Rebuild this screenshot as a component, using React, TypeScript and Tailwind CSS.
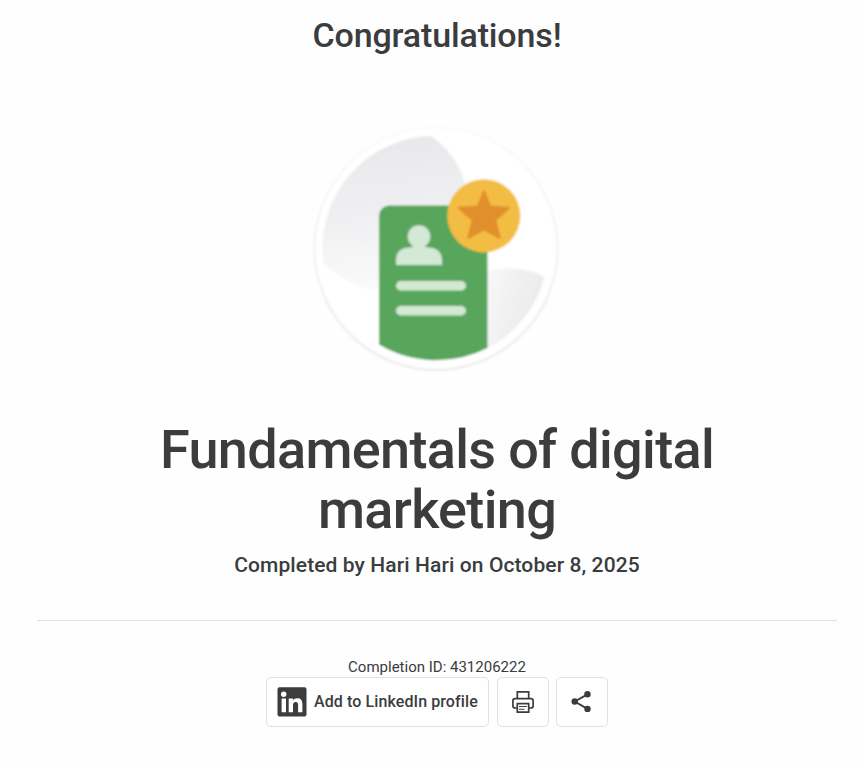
import type { ReactNode } from "react";

function CourseBadge() {
  return (
    <svg width="256" height="260" viewBox="308 118 256 260" aria-hidden="true">
      <defs>
        <linearGradient id="leaf" x1="375" y1="140" x2="395" y2="290" gradientUnits="userSpaceOnUse">
          <stop offset="0" stopColor="#e8e8eb" />
          <stop offset="0.5" stopColor="#f0f0f2" />
          <stop offset="1" stopColor="#fbfbfb" />
        </linearGradient>
        <linearGradient id="leafSmall" x1="535" y1="310" x2="480" y2="295" gradientUnits="userSpaceOnUse">
          <stop offset="0" stopColor="#ebebed" />
          <stop offset="1" stopColor="#f8f8f9" />
        </linearGradient>
        <linearGradient id="ring" x1="436" y1="126" x2="436" y2="371" gradientUnits="userSpaceOnUse">
          <stop offset="0" stopColor="#fbfbfb" />
          <stop offset="1" stopColor="#ececec" />
        </linearGradient>
        <filter id="soft" x="-5%" y="-5%" width="110%" height="110%">
          <feGaussianBlur stdDeviation="0.8" />
        </filter>
      </defs>
      <g filter="url(#soft)">
        <circle cx="436" cy="248.5" r="121.5" fill="#fff" stroke="url(#ring)" strokeWidth="2.4" />
        <path d="M428.5 136A112.5 112.5 0 0 0 323.5 264C339 277 355 287 375 290L440 270L464.5 183C460 163 447 148 433 137.500Q430.500 136 428.500 136Z" fill="url(#leaf)" />
        <path d="M486 272C502 266 526 267 544.500 277A112.500 112.500 0 0 1 486 349Z" fill="url(#leafSmall)" />
        <path d="M379 216A10.500 10.500 0 0 1 389.500 205.500H487.500V348A112.500 112.500 0 0 1 379 344.500Z" fill="#58a55c" />
        <circle cx="419" cy="236.500" r="11.300" fill="#d3e9d6" />
        <path d="M396 265V260C396 252 401.500 247.500 409 247.500Q414 247.500 414 244H424Q424 247.500 429 247.500C437 247.500 442 253 442 260V265Z" fill="#d3e9d6" />
        <rect x="396" y="281" width="70" height="9.500" rx="4.700" fill="#d3e9d6" />
        <rect x="396" y="306" width="70" height="9.500" rx="4.700" fill="#d3e9d6" />
        <circle cx="483.800" cy="215.800" r="36.600" fill="#f2bd42" />
        <path d="M484 191.500L490 206.800L508.500 208L495 220L499.500 237.600L484 229.200L468.500 237.600L473 220L459 208L478 206.800Z" fill="#e18f2b" stroke="#e18f2b" strokeWidth="2.400" strokeLinejoin="round" />
      </g>
    </svg>
  );
}

function LinkedInIcon() {
  return (
    <svg width="30" height="30" viewBox="0 0 30 30" aria-hidden="true">
      <rect x="0.500" y="0.300" width="29" height="29.200" rx="2" fill="#3a3c3e" />
      <circle cx="6.700" cy="7.200" r="2.700" fill="#fff" />
      <path d="M4.600 11.600H9V25.300H4.600zM11.700 11.600H15.900V13.500C16.700 12.100 18.300 11.200 20.300 11.200C24.400 11.200 25.400 13.900 25.400 17.700V25.300H21.100V18.500C21.100 16.700 21 14.900 18.700 14.900C16.500 14.900 16 16.500 16 18.400V25.300H11.700z" fill="#fff" />
    </svg>
  );
}

function PrintIcon() {
  return (
    <svg width="22" height="22" viewBox="0 0 22 22" fill="none" stroke="#3a3c3e" strokeWidth="1.700" aria-hidden="true">
      <path d="M5.300 7.500V0.900H16.700V7.500" />
      <path d="M5.200 17H3.200Q0.900 17 0.900 15V9.700Q0.900 7.700 3.200 7.700H18.800Q21.100 7.700 21.100 9.700V15Q21.100 17 18.800 17H16.800" />
      <path d="M5.300 12.700H16.700V21.100H5.300z" />
      <path d="M7 15.500H15M7 18.300H12.500" strokeWidth="1.100" />
    </svg>
  );
}

function ShareIcon() {
  return (
    <svg width="21" height="22" viewBox="0 0 21 22" aria-hidden="true">
      <path d="M16.500 3.300L3.700 10.500L16.500 17.900" fill="none" stroke="#3a3c3e" strokeWidth="1.900" />
      <g fill="#3a3c3e">
        <circle cx="16.500" cy="3.200" r="3.200" />
        <circle cx="3.700" cy="10.500" r="3.200" />
        <circle cx="16.500" cy="17.900" r="3.200" />
      </g>
    </svg>
  );
}

function OutlineButton({ label, className, children }: { label: string; className: string; children: ReactNode }) {
  return (
    <button
      type="button"
      aria-label={label}
      className={`flex h-[50px] items-center rounded-[5px] border border-[#e0e1e3] bg-white ${className}`}
    >
      {children}
    </button>
  );
}

export default function App() {
  return (
    <main className="h-[764px] w-[864px] overflow-hidden bg-[#fefefe] pl-[37px] font-[Roboto,sans-serif] text-[#3a3c3e]">
      <div className="flex w-[800px] flex-col items-center text-center">
        <h1 className="mt-[13px] text-[34px] leading-[44px] font-medium tracking-[-0.15px] whitespace-nowrap">
          Congratulations!
        </h1>
        <div className="mt-[61px] mr-[2px]">
          <CourseBadge />
        </div>
        <h2 className="mt-[42px] w-[640px] text-[54px] leading-[60px] font-medium tracking-[-0.67px]">
          Fundamentals of digital marketing
        </h2>
        <p className="mt-[11px] text-[21px] leading-[28px] font-medium tracking-[0.1px] whitespace-nowrap">
          Completed by Hari Hari on October 8, 2025
        </p>
        <hr className="mt-[41px] w-full border-t border-[#e0e1e3]" />
        <p className="mt-[36px] text-[15px] leading-[20px]">Completion ID: 431206222</p>
        <div className="flex w-[342px]">
          <OutlineButton label="Add to LinkedIn profile" className="mr-2 w-[223px] gap-[7px] pl-[10px]">
            <LinkedInIcon />
            <span className="text-[16px] font-medium tracking-[0.1px] whitespace-nowrap">Add to LinkedIn profile</span>
          </OutlineButton>
          <OutlineButton label="Print" className="mr-[7px] w-[52px] justify-center">
            <PrintIcon />
          </OutlineButton>
          <OutlineButton label="Share" className="w-[52px] pl-[14px]">
            <ShareIcon />
          </OutlineButton>
        </div>
      </div>
    </main>
  );
}
